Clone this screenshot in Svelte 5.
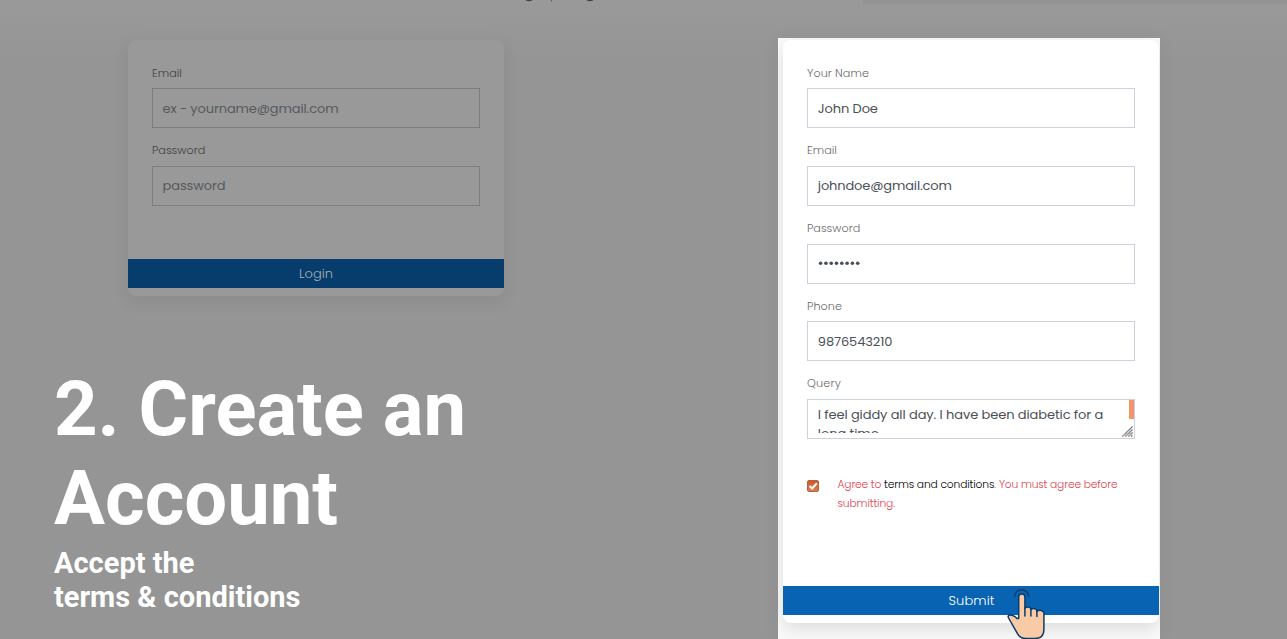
<script>
  const loginFields = [
    { label: 'Email', lw: 30, value: 'ex - yourname@gmail.com', vw: 176 },
    { label: 'Password', lw: 53.3, value: 'password', vw: 63 }
  ];
  const signupFields = [
    { label: 'Your Name', lw: 62, value: 'John Doe', vw: 60 },
    { label: 'Email', lw: 30, value: 'johndoe@gmail.com', vw: 134 },
    { label: 'Password', lw: 53.3, value: '', dots: 8 },
    { label: 'Phone', lw: 35, value: '9876543210', vw: 74.5 }
  ];

  // Tracks a line of text out to a given width.
  function fit(node, width) {
    const natural = node.getBoundingClientRect().width;
    const count = node.textContent.length;
    node.style.letterSpacing = `${(width - natural) / count}px`;
  }
</script>

<div class="page">
  <svg class="topline" viewBox="0 0 1287 4" width="1287" height="4" aria-hidden="true">
    <rect x="863" y="0" width="424" height="4" fill="#939393" />
    <path d="M526 0q3 1.2 6 0M587 0q3 1.2 6 0" stroke="#444" stroke-width="1.2" fill="none" />
    <path d="M551.5 0v1.3" stroke="#555" stroke-width="1" />
  </svg>

  <main>
    <section class="left">
      <div class="card login">
        {#each loginFields as f}
          <div class="group">
            <div class="label"><span use:fit={f.lw}>{f.label}</span></div>
            <div class="input"><span use:fit={f.vw}>{f.value}</span></div>
          </div>
        {/each}
        <div class="button"><span use:fit={34}>Login</span></div>
      </div>
      <div class="caption">
        <h1><span use:fit={412}>2. Create an</span><br /><span use:fit={284}>Account</span></h1>
        <p><span use:fit={140.5}>Accept the</span><br /><span use:fit={246.5}>terms &amp; conditions</span></p>
      </div>
    </section>

    <section class="spotlight">
      <div class="clip">
        <div class="card signup">
          {#each signupFields as f}
            <div class="group">
              <div class="label"><span use:fit={f.lw}>{f.label}</span></div>
              <div class="input">
                {#if f.dots}
                  <svg class="dots" width="44" height="38" viewBox="0 0 44 38" aria-hidden="true">
                    {#each Array(f.dots) as _, i}<circle cx={2.6 + i * 5.3} cy="18.3" r="1.8" fill="#495057" />{/each}
                  </svg>
                {:else}
                  <span use:fit={f.vw}>{f.value}</span>
                {/if}
              </div>
            </div>
          {/each}
          <div class="group">
            <div class="label"><span use:fit={34}>Query</span></div>
            <div class="input area">
              <div class="lines">
                <span use:fit={285.3}>I feel giddy all day. I have been diabetic for a</span><br /><span use:fit={63.5}>long time.</span>
              </div>
              <div class="thumb"></div>
              <svg class="grip" viewBox="0 0 11 11" width="11" height="11" aria-hidden="true">
                <path d="M.5 10.5l10-10M3.5 10.5l7-7M6.5 10.5l4-4M9.2 10.5l1.3-1.3" stroke="#555" stroke-width="1.2" stroke-dasharray="1.2 .3" fill="none" />
              </svg>
            </div>
          </div>
          <div class="agree">
            <svg viewBox="0 0 14 14" width="14" height="14" aria-hidden="true">
              <defs>
                <linearGradient id="tick" x1="0" y1="0" x2="0" y2="1">
                  <stop offset="0" stop-color="#c85a26" /><stop offset="1" stop-color="#e27b50" />
                </linearGradient>
              </defs>
              <rect x="1.5" y="1.5" width="11" height="11" rx="1.5" fill="url(#tick)" stroke="#b5623d" />
              <path d="M3.6 7l2.5 2.5 4.8-5.2" fill="none" stroke="#fff" stroke-width="2" />
            </svg>
            <p><span class="run" use:fit={46.5}>{'Agree to '}</span><span class="run dark" use:fit={110.3}>terms and conditions</span><span class="run" use:fit={123.2}>. You must agree before</span><br /><span class="run" use:fit={57.5}>submitting.</span></p>
          </div>
          <div class="button"><span use:fit={46}>Submit</span></div>
        </div>
      </div>
      <svg class="hand" viewBox="1005 586 42 54" width="42" height="54" aria-hidden="true">
        <path d="M1014.8 596.6a6.9 6.9 0 0 1 13.8 0" fill="none" stroke="#0b3c68" stroke-width="1.5" stroke-linecap="round" />
        <path d="M1018.7 618.5V597a3.1 3.1 0 0 1 6.2 0v11.2q3-2.7 6 .4v1q3-2.3 6 .5v1.3q3.6-2.8 7 .9v17.2q0 9-9 9h-9q-5.5 0-8.3-4.7l-9-15.8q-1-1.7.3-2.9 1.7-.2 3.8.3 2.5.6 4.3 3.1z" fill="#f8caa5" stroke="#0b3c68" stroke-width="1.5" stroke-linejoin="round" />
        <path d="M1024.9 608v8M1030.9 609v7M1036.9 610.5v6" fill="none" stroke="#0b3c68" stroke-width="1.5" stroke-linecap="round" />
      </svg>
    </section>
  </main>
</div>

<style>
  :global(body) { margin: 0; }
  .page {
    width: 1287px;
    height: 639px;
    overflow: hidden;
    display: flex;
    flex-direction: column;
    background: linear-gradient(#999 0, #959595 60px, #959595 100%);
    font-family: Poppins, Inter, sans-serif;
  }
  .topline { display: block; flex: none; }
  main {
    display: grid;
    grid-template-columns: 778px 382px;
    height: 601px;
    padding-top: 34px;
    flex: none;
  }
  .left { padding: 2px 0 0 54px; box-sizing: border-box; }
  .card {
    width: 376px;
    box-sizing: border-box;
    padding-top: 24px;
    border-radius: 8px;
    display: flex;
    flex-direction: column;
  }
  .login {
    margin-left: 74px;
    height: 256px;
    background: #999;
    box-shadow: 0 5px 18px rgba(0, 0, 0, .075);
    --edge: #7d7e81;
    --label: #404040;
    --value: #55595e;
    --button: #063d6d;
    --button-text: #a8aeb4;
    --indent: 9.5px;
  }
  .signup {
    margin: 2px 0 0 5px;
    height: 583px;
    background: #fff;
    box-shadow: 0 6px 18px rgba(0, 0, 0, .12);
    --edge: #ced1d9;
    --label: #6a6a6a;
    --value: #495057;
    --button: #0963b3;
    --button-text: #fff;
    --indent: 9.8px;
  }
  .group { height: 77.7px; padding: 0 24px; flex: none; }
  .label {
    height: 24.2px;
    box-sizing: border-box;
    padding-top: .6px;
    line-height: 17.4px;
    font-size: 11.2px;
    font-weight: 300;
    color: var(--label);
    white-space: nowrap;
  }
  .input {
    height: 40px;
    box-sizing: border-box;
    border: 1px solid var(--edge);
    padding: .5px 0 0 var(--indent);
    line-height: 38px;
    font-size: 13px;
    color: var(--value);
    white-space: nowrap;
  }
  .label span, .input span, .button span, .caption span, .run { display: inline-block; white-space: pre; }
  .dots { display: block; }
  .area { position: relative; padding-top: 5px; }
  .lines { height: 28px; overflow: hidden; line-height: 19.5px; }
  .thumb { position: absolute; right: 0; top: 0; width: 5px; height: 19px; background: #f4946c; }
  .grip { position: absolute; right: 1px; bottom: 1px; }
  .agree {
    display: flex;
    gap: 17.5px;
    padding: 22.25px 0 0 23px;
    font-size: 10.7px;
    line-height: 19.2px;
    color: #e0404f;
    font-weight: 300;
  }
  .agree svg { margin-top: 4px; flex: none; }
  .agree p { margin: 0; white-space: nowrap; }
  .dark { color: #000; }
  .button {
    height: 29px;
    margin: auto 0 8px;
    background: var(--button);
    color: var(--button-text);
    line-height: 29px;
    font-size: 13px;
    font-weight: 300;
    text-align: center;
  }
  .signup .button { padding-left: 1px; }
  .caption {
    margin-top: 69px;
    color: #fff;
    font-family: Roboto, sans-serif;
    font-weight: 700;
  }
  h1 { margin: 0; font-size: 76px; line-height: 89px; font-weight: 700; white-space: nowrap; }
  .caption p { margin: 3px 0 0; font-size: 29px; line-height: 34px; white-space: nowrap; }
  .spotlight { position: relative; box-shadow: 0 0 18px rgba(0, 0, 0, .05); }
  .clip { height: 601px; overflow: hidden; background: #fafafa; display: flex; }
  .hand { position: absolute; left: 227px; top: 548px; }
</style>
